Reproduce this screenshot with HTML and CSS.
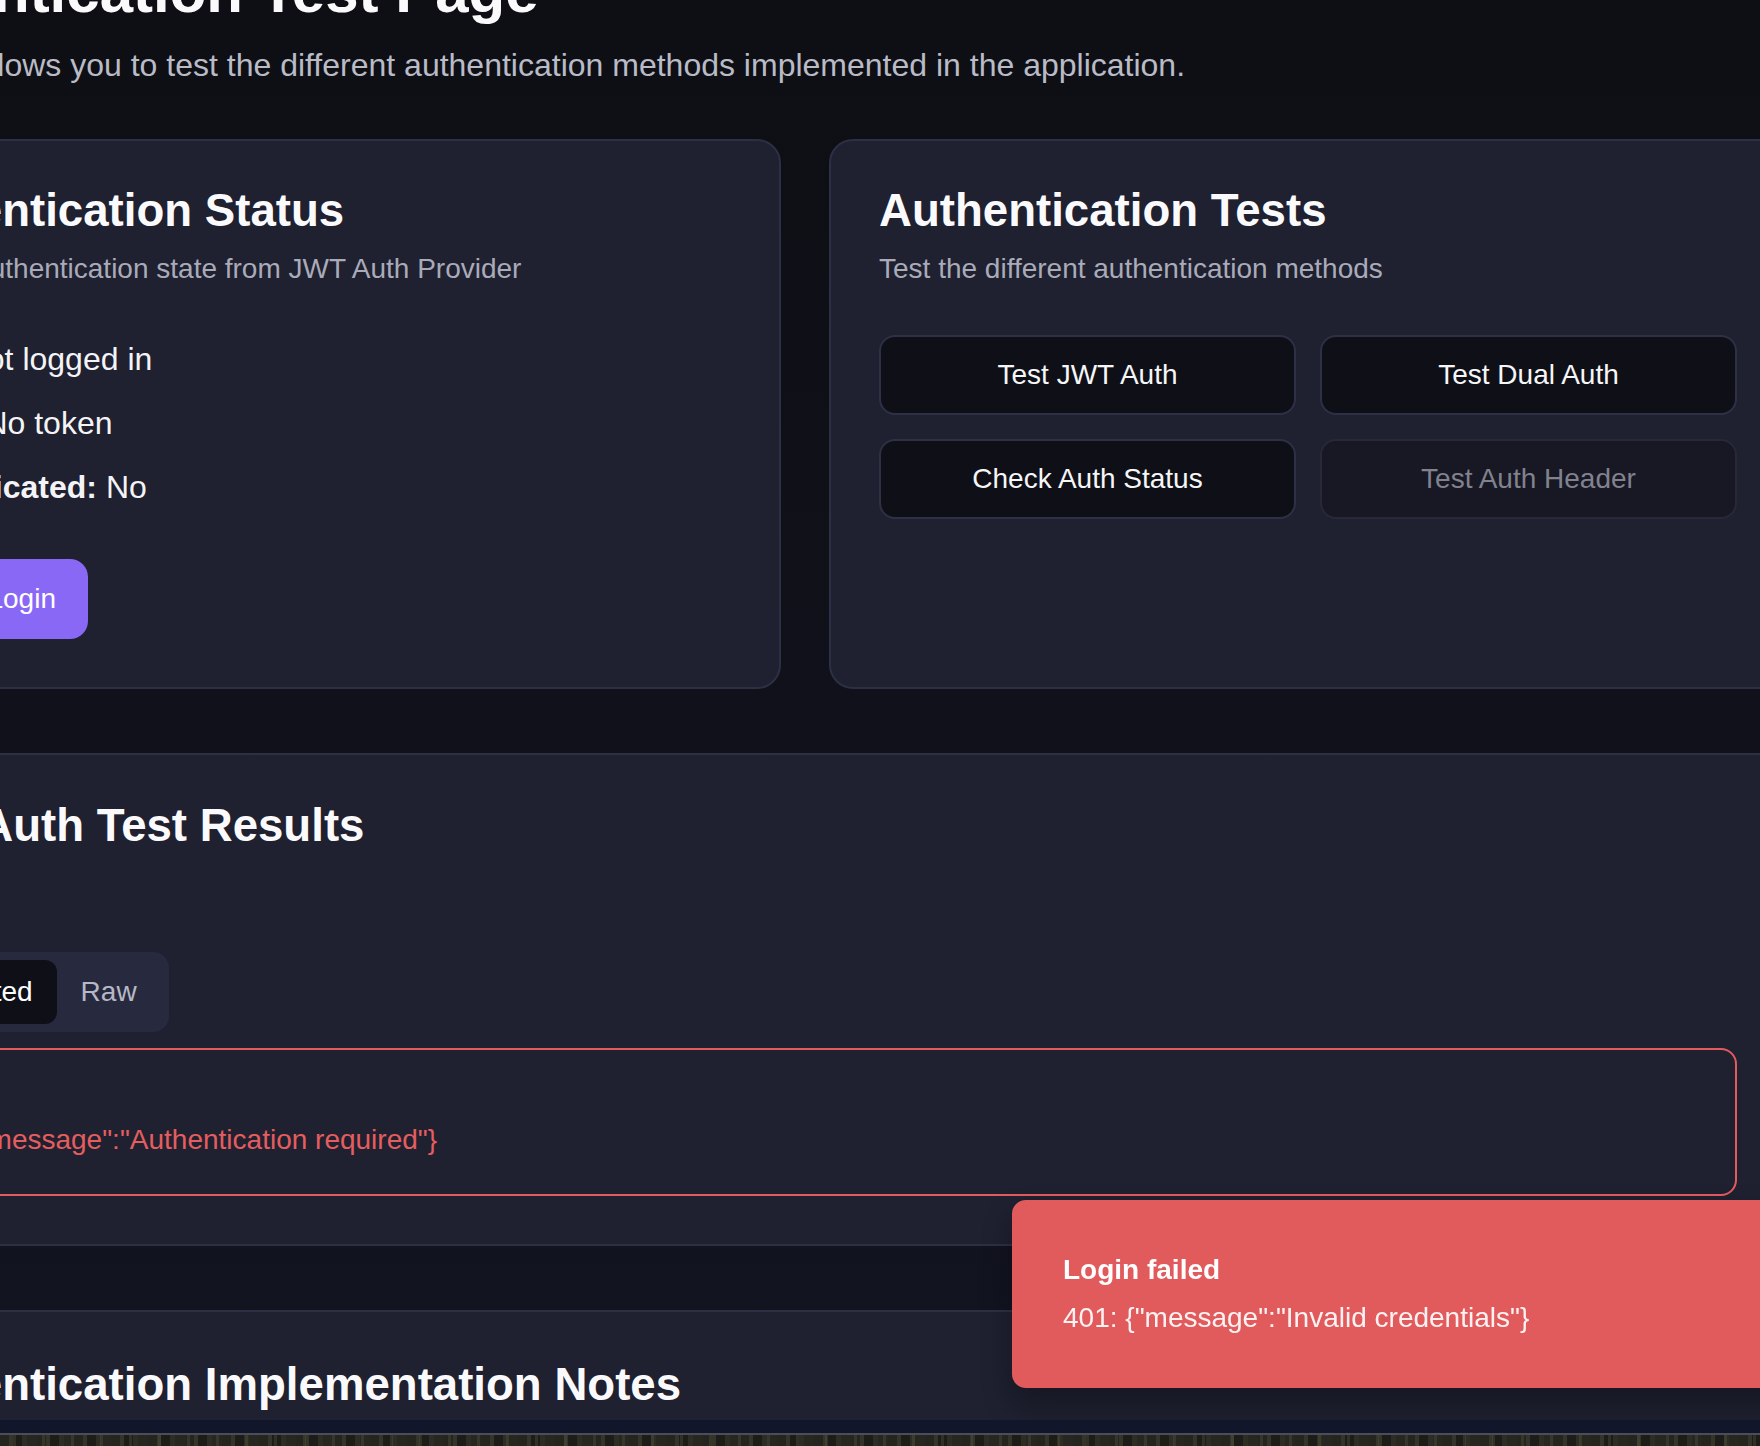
FILE: index.html
```html
<!DOCTYPE html>
<html lang="en">
<head>
<meta charset="utf-8">
<title>Authentication Test Page</title>
<link rel="stylesheet" href="styles.css">
</head>
<body>
<div class="page">
  <header class="intro">
    <h1 class="intro-title">Authentication Test Page</h1>
    <p class="intro-text">This page allows you to test the different authentication methods implemented in the application.</p>
  </header>

  <div class="grid">
    <section class="card">
      <div class="card-header">
        <h2 class="card-title">Authentication Status</h2>
        <p class="card-desc">Current authentication state from JWT Auth Provider</p>
      </div>
      <div class="card-content">
        <div class="status">
          <p class="status-line"><strong>User:</strong> Not logged in</p>
          <p class="status-line"><strong>Token:</strong> No token</p>
          <p class="status-line"><strong>Authenticated:</strong> No</p>
        </div>
        <div class="actions">
          <button class="btn btn-primary">Demo Login</button>
        </div>
      </div>
    </section>

    <section class="card">
      <div class="card-header">
        <h2 class="card-title">Authentication Tests</h2>
        <p class="card-desc">Test the different authentication methods</p>
      </div>
      <div class="card-content">
        <div class="tests">
          <button class="btn btn-outline">Test JWT Auth</button>
          <button class="btn btn-outline">Test Dual Auth</button>
          <button class="btn btn-outline">Check Auth Status</button>
          <button class="btn btn-outline" disabled>Test Auth Header</button>
        </div>
      </div>
    </section>
  </div>

  <section class="card results">
    <div class="card-header">
      <h2 class="card-title">JWT Auth Test Results</h2>
      <p class="card-desc"></p>
    </div>
    <div class="card-content">
      <div class="tabs">
        <div class="tabs-list">
          <span class="tab active">Formatted</span>
          <span class="tab">Raw</span>
        </div>
        <div class="alert">
          <div class="alert-title">Error</div>
          <div class="alert-desc">401: {"message":"Authentication required"}</div>
        </div>
      </div>
    </div>
  </section>

  <section class="card notes">
    <div class="card-header notes-header">
      <h2 class="card-title">Authentication Implementation Notes</h2>
    </div>
  </section>
</div>

<div class="toast">
  <div class="toast-title">Login failed</div>
  <div class="toast-desc">401: {"message":"Invalid credentials"}</div>
</div>

<div class="os-bar">
  <div class="os-strip"></div>
  <div class="os-line"></div>
  <div class="os-wallpaper"></div>
</div>
</body>
</html>
```

FILE: styles.css
```css
html, body {
  margin: 0;
  padding: 0;
}

body {
  height: 1446px;
  overflow: hidden;
  background: linear-gradient(180deg, #0e0f14 0%, #10111a 50%, #121421 100%);
  font-family: "Liberation Sans", Arial, Helvetica, sans-serif;
  color: #f6f6f8;
}

.page {
  width: 1964px;
  margin-left: -177px;
}

.intro-title {
  margin: -44px 0 0;
  font-size: 60px;
  line-height: 72px;
  font-weight: 700;
  color: #fafafc;
}

.intro-text {
  margin: 13px 0 0;
  font-size: 32px;
  line-height: 48px;
  color: #b9bbc7;
}

.grid {
  display: grid;
  grid-template-columns: 1fr 1fr;
  gap: 48px;
  margin-top: 50px;
}

.card {
  background: #1f2030;
  border: 2px solid #2d2f44;
  border-radius: 24px;
}

.card-header {
  display: flex;
  flex-direction: column;
  gap: 16px;
  padding: 47px 48px 46px;
}

.card-title {
  margin: 0;
  font-size: 45.6px;
  line-height: 45px;
  font-weight: 700;
  color: #fafafc;
}

.card-desc {
  margin: 0;
  min-height: 40px;
  font-size: 28px;
  line-height: 40px;
  color: #a9abb9;
}

.card-content {
  padding: 0 48px 48px;
}

.status {
  display: flex;
  flex-direction: column;
  gap: 16px;
}

.status-line {
  margin: 0;
  font-size: 32px;
  line-height: 48px;
  color: #f4f4f6;
}

.status-line strong {
  font-weight: 700;
}

.actions {
  display: flex;
  gap: 24px;
  margin-top: 48px;
}

.btn {
  height: 80px;
  box-sizing: border-box;
  font-family: inherit;
  font-size: 28px;
  border-radius: 16px;
  cursor: pointer;
}

.btn-primary {
  padding: 0 32px;
  border: none;
  border-radius: 18px;
  background: #8a68f6;
  color: #ffffff;
}

.tests {
  display: grid;
  grid-template-columns: 1fr 1fr;
  gap: 24px;
}

.btn-outline {
  width: 100%;
  background: #0f1017;
  border: 2px solid #2e3046;
  color: #f6f6f8;
}

.btn-outline:disabled {
  background: #171823;
  border-color: #272939;
  color: #80828e;
  cursor: default;
}

.results {
  margin-top: 64px;
}

.results .card-header {
  padding-top: 48px;
  padding-bottom: 48px;
}

.tabs {
  display: flex;
  flex-direction: column;
  gap: 16px;
}

.tabs-list {
  align-self: flex-start;
  display: flex;
  height: 80px;
  box-sizing: border-box;
  padding: 8px;
  background: #272a3e;
  border-radius: 16px;
}

.tab {
  display: flex;
  align-items: center;
  padding: 0 24px;
  font-size: 28px;
  border-radius: 12px;
  color: #b6b8c6;
}

.tab.active {
  background: #0f1017;
  color: #ffffff;
}

.alert {
  border: 2px solid #e25b5d;
  border-radius: 16px;
  padding: 32px;
  color: #e45d5f;
}

.alert-title {
  font-size: 28px;
  line-height: 28px;
  font-weight: 500;
  margin-bottom: 8px;
}

.alert-desc {
  font-size: 28px;
  line-height: 44px;
}

.notes {
  margin-top: 64px;
  height: 134px;
  box-sizing: border-box;
  border-bottom: none;
  border-bottom-left-radius: 0;
  border-bottom-right-radius: 0;
}

.notes-header {
  padding-top: 50px;
}

.toast {
  position: fixed;
  left: 1012px;
  top: 1200px;
  width: 840px;
  box-sizing: border-box;
  padding: 48px 49px;
  background: #e15b5d;
  border: 2px solid #e15b5d;
  border-radius: 14px;
  box-shadow: 0 16px 30px rgba(0, 0, 0, 0.28);
  color: #ffffff;
}

.toast-title {
  font-size: 28px;
  line-height: 40px;
  font-weight: 700;
}

.toast-desc {
  margin-top: 8px;
  font-size: 28px;
  line-height: 40px;
  opacity: 0.92;
}

.os-bar {
  position: fixed;
  left: 0;
  right: 0;
  bottom: 0;
  height: 26px;
  display: flex;
  flex-direction: column;
}

.os-strip {
  height: 13px;
  background: #12162a;
}

.os-line {
  height: 2px;
  background: #4a4d5a;
}

.os-wallpaper {
  flex: 1;
  background:
    repeating-linear-gradient(90deg, rgba(0,0,0,0) 0 13px, rgba(90,84,64,0.35) 13px 16px, rgba(0,0,0,0) 16px 29px),
    repeating-linear-gradient(90deg, #24251e 0 9px, #35332a 9px 13px, #1c1d19 13px 22px, #2e2d25 22px 27px, #272620 27px 37px);
}
```
